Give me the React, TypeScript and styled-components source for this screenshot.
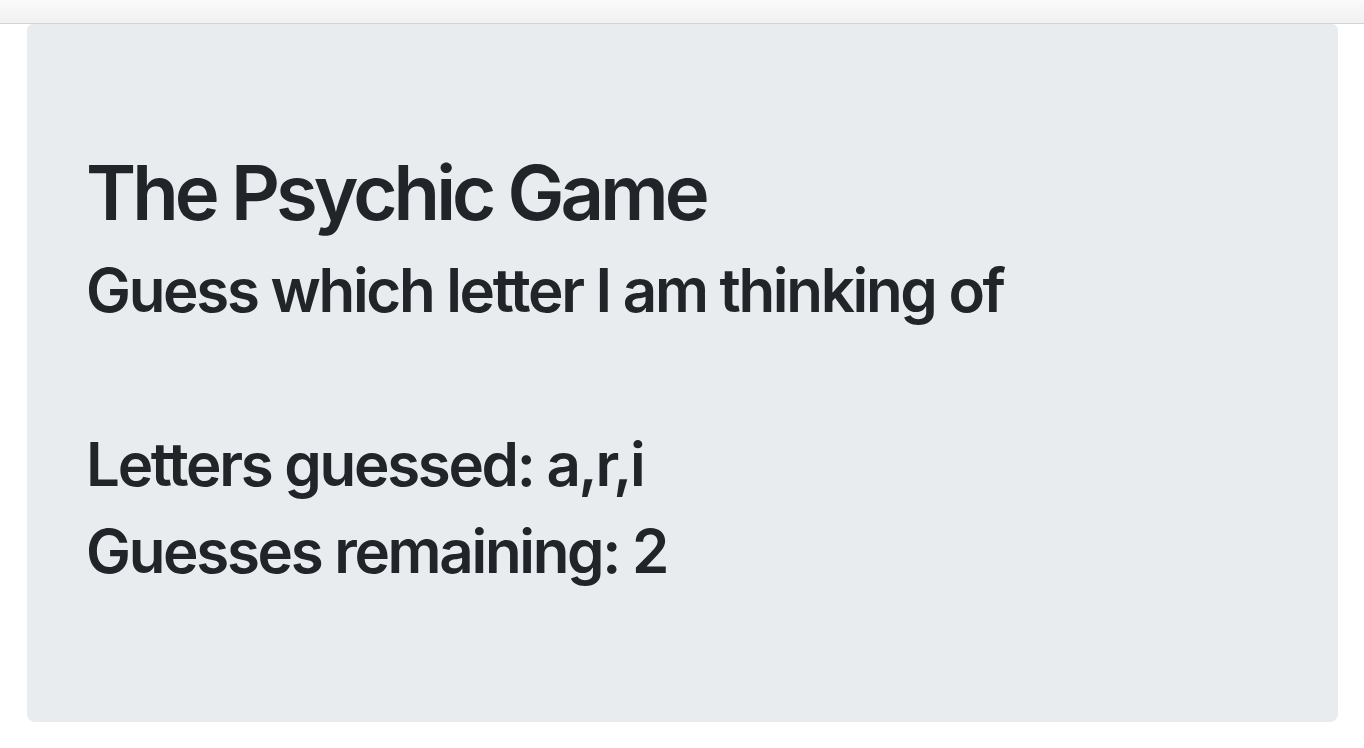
import React from 'react';
import styled, { createGlobalStyle } from 'styled-components';

const GlobalStyle = createGlobalStyle`
  html, body {
    margin: 0;
    padding: 0;
    background: #ffffff;
    font-family: Inter, "Noto Sans", "Liberation Sans", sans-serif;
    color: #212529;
  }
`;

const TopBar = styled.div`
  height: 23px;
  background: linear-gradient(#fafafa, #f1f1f1);
  border-bottom: 1px solid #d3d3d3;
`;

const Jumbotron = styled.div`
  margin: 0 26px 26px 27px;
  padding: 123px 59px 120px;
  background: #e9ecef;
  border-radius: 6px 6px 8px 8px;
`;

const Title = styled.h1`
  margin: 0 0 16px;
  font-size: 76px;
  font-weight: 580;
  line-height: 1.2;
  letter-spacing: -3.95px;
`;

const Line = styled.h2<{ $gap?: number }>`
  margin: 0 0 ${(p) => p.$gap ?? 15}px;
  font-size: 60px;
  font-weight: 580;
  line-height: 1.2;
  letter-spacing: -2.3px;
`;

const guessed = ['a', 'r', 'i'];
const remaining = 2;

const App: React.FC = () => {
  return (
    <>
      <GlobalStyle />
      <TopBar />
      <Jumbotron>
        <Title>The Psychic Game</Title>
        <Line $gap={102}>Guess which letter I am thinking of</Line>
        <Line>Letters guessed: {guessed.join(',')}</Line>
        <Line>Guesses remaining: {remaining}</Line>
      </Jumbotron>
    </>
  );
};

export default App;
